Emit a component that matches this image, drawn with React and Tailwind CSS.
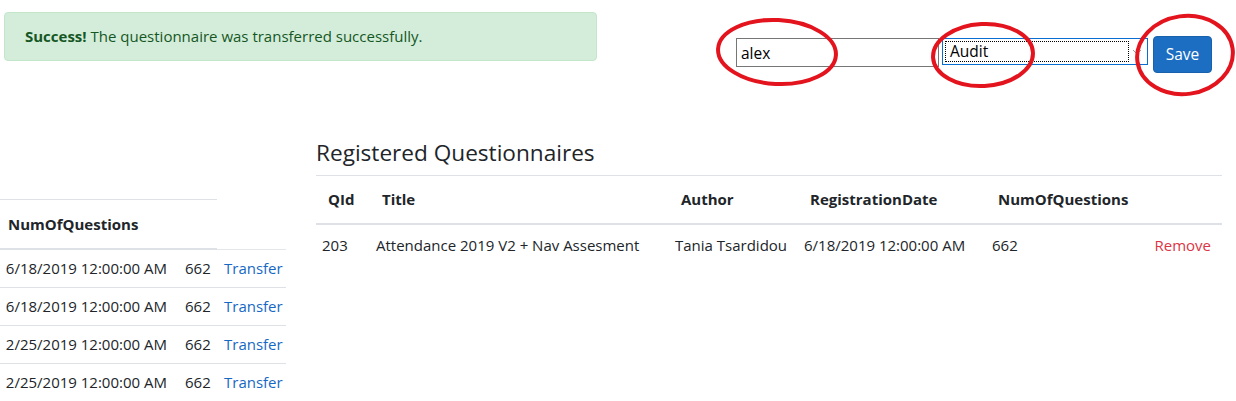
import React from 'react';

// --- Data ---
const leftRows = [
  { date: '6/18/2019 12:00:00 AM', num: 662 },
  { date: '6/18/2019 12:00:00 AM', num: 662 },
  { date: '2/25/2019 12:00:00 AM', num: 662 },
  { date: '2/25/2019 12:00:00 AM', num: 662 },
];

const registered = [
  {
    qid: 203,
    title: 'Attendance 2019 V2 + Nav Assesment',
    author: 'Tania Tsardidou',
    date: '6/18/2019 12:00:00 AM',
    num: 662,
  },
];

// --- Hand drawn red circles over the form ---
const Annotations = () => (
  <svg
    className="absolute inset-0 pointer-events-none"
    width="1236"
    height="401"
    viewBox="0 0 1236 401"
    fill="none"
  >
    <ellipse cx="777" cy="52" rx="59" ry="32" stroke="#e3141d" strokeWidth="4" transform="rotate(3 777 52)" />
    <ellipse cx="983" cy="55" rx="50" ry="31" stroke="#e3141d" strokeWidth="4" transform="rotate(-3 983 55)" />
    <ellipse cx="1185" cy="55" rx="48" ry="39" stroke="#e3141d" strokeWidth="4" transform="rotate(-8 1185 55)" />
  </svg>
);

// --- Left (clipped) table ---
const TransferTable = () => (
  <div className="w-[287px] mt-[69px] shrink-0">
    <div className="w-[217px] border-t border-[#dee2e6] h-[49px] flex items-center pl-[8px] font-bold">
      NumOfQuestions
    </div>
    <div className="relative h-[2px]">
      <div className="absolute left-0 top-0 w-[217px] h-[2px] bg-[#dee2e6]" />
      <div className="absolute left-[217px] top-[1px] w-[69px] h-[1px] bg-[#e4e7ea]" />
    </div>
    {leftRows.map((r, idx) => (
      <div key={idx} className="flex items-center h-[38px] border-b border-[#dee2e6] w-[286px]">
        <span className="w-[177px] pr-[10px] text-right whitespace-nowrap overflow-hidden">{r.date}</span>
        <span className="w-[47px] pl-[8px]">{r.num}</span>
        <a className="text-[#1768c4]">Transfer</a>
      </div>
    ))}
  </div>
);

// --- Right table ---
const RegisteredTable = () => (
  <div className="ml-[29px] w-[906px]">
    <h3 className="text-[22.6px] leading-[30px] mt-[8px] mb-[7px] text-[#212529]">
      Registered Questionnaires
    </h3>
    <table className="w-full table-fixed border-collapse">
      <colgroup>
        <col className="w-[54px]" />
        <col className="w-[299px]" />
        <col className="w-[129px]" />
        <col className="w-[188px]" />
        <col className="w-[150px]" />
        <col />
      </colgroup>
      <thead>
        <tr className="border-t border-[#dee2e6] border-b-2 border-b-[#dee2e6]">
          <th className="h-[48px] pl-[12px] text-left font-bold">QId</th>
          <th className="pl-[12px] text-left font-bold">Title</th>
          <th className="pl-[12px] text-left font-bold">Author</th>
          <th className="pl-[12px] text-left font-bold">RegistrationDate</th>
          <th className="pl-[12px] text-left font-bold">NumOfQuestions</th>
          <th />
        </tr>
      </thead>
      <tbody>
        {registered.map((r) => (
          <tr key={r.qid}>
            <td className="h-[42px] pl-[6px]">{r.qid}</td>
            <td className="pl-[6px] whitespace-nowrap">{r.title}</td>
            <td className="pl-[6px] whitespace-nowrap">{r.author}</td>
            <td className="pl-[6px] whitespace-nowrap">{r.date}</td>
            <td className="pl-[6px]">{r.num}</td>
            <td className="pr-[11px] text-right text-[#dc3545]">Remove</td>
          </tr>
        ))}
      </tbody>
    </table>
  </div>
);

export default function App() {
  return (
    <div className="relative w-[1236px] h-[401px] overflow-hidden bg-white text-[15px] text-[#212529] font-['Open_Sans',sans-serif]">
      <div className="flex items-start pt-[12px]">
        <div className="ml-[4px] w-[593px] h-[49px] flex items-center pl-[20px] rounded-[4px] bg-[#d4edda] border border-[#c3e6cb] text-[#155724]">
          <span>
            <strong className="font-bold">Success!</strong> The questionnaire was transferred successfully.
          </span>
        </div>

        <div className="ml-auto mr-[24px] mt-[24px] flex items-start">
          <input
            defaultValue="alex"
            readOnly
            className="mt-[2px] w-[203px] h-[29px] border border-[#767676] px-[4px] text-[15.5px] text-black outline-none font-['Open_Sans',sans-serif]"
          />
          <div className="mt-[2px] ml-[3px] w-[206px] h-[27px] border border-[#0a6ed1] flex items-center p-[2px]">
            <div className="flex-1 h-full border border-dotted border-black flex items-center pl-[4px] text-[15.5px] text-black">
              Audit
            </div>
            <svg className="w-[14px] h-[14px] mx-[1px]" viewBox="0 0 14 14" fill="none">
              <path d="M3 5l4 4 4-4" stroke="#9a9a9a" strokeWidth="1" />
            </svg>
          </div>
          <button className="ml-[5px] w-[59px] h-[37px] rounded-[4px] bg-[#1b6ec2] border border-[#1861ac] text-white text-[15.5px]">
            Save
          </button>
        </div>
      </div>

      <div className="flex items-start mt-[57px]">
        <TransferTable />
        <RegisteredTable />
      </div>

      <Annotations />
    </div>
  );
}
